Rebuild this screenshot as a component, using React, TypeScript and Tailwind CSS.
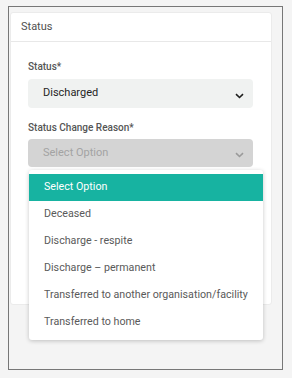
import { useState } from "react";

const options = [
    "Select Option",
    "Deceased",
    "Discharge - respite",
    "Discharge – permanent",
    "Transferred to another organisation/facility",
    "Transferred to home",
];

function Chevron({ muted }: { muted?: boolean }) {
    return (
        <svg width="9" height="6" viewBox="0 0 9 6" className="self-end mb-[9px]">
            <path
                d="M1 1.2l3.5 3.3 3.5-3.3"
                fill="none"
                stroke={muted ? "#9a9a9a" : "#1f1f1f"}
                strokeWidth="1.6"
            />
        </svg>
    );
}

export default function App() {
    const [selected] = useState(0);

    return (
        <div
            className="w-[292px] h-[378px] bg-[#f4f4f4] pt-[6px] pl-[8px]"
            style={{ fontFamily: "Roboto, 'Liberation Sans', sans-serif" }}
        >
            <div className="w-[275px] h-[364px] border border-[#777] pt-[5px] pl-px">
                <div className="w-[262px] h-[293px] bg-white rounded-[3px] border border-[#ebebeb] flex flex-col">
                    {/* header */}
                    <div className="h-[29px] flex items-center pl-[10px] border-b border-[#e8e8e8] text-[11px] text-[#4f4f4f]">
                        Status
                    </div>

                    <div className="px-[17px] pt-[18px] flex flex-col gap-[13px]">
                        <div className="flex flex-col gap-[5px]">
                            <div className="text-[10px] font-medium leading-[14px] text-[#555]">
                                Status*
                            </div>
                            <div className="h-[29px] w-[225px] rounded-[4px] bg-[#f0f2f1] flex justify-between items-center pl-[15px] pr-[9px] text-[11px] text-[#1f1f1f]">
                                Discharged
                                <Chevron />
                            </div>
                        </div>

                        <div className="flex flex-col gap-[4px]">
                            <div className="text-[10px] font-medium leading-[14px] text-[#555]">
                                Status Change Reason*
                            </div>
                            <div className="relative">
                                <div className="h-[28px] w-[225px] rounded-[4px] bg-[#d4d4d4] flex justify-between items-center pl-[15px] pr-[9px] text-[11px] text-[#a3a3a3]">
                                    Select Option
                                    <Chevron muted />
                                </div>

                                {/* open dropdown */}
                                <div className="absolute left-px top-full mt-[3px] w-[234px] py-[4px] bg-white rounded-[3px] shadow-[0_1px_4px_rgba(0,0,0,0.22)] z-10 flex flex-col">
                                    {options.map((opt, i) => (
                                        <div
                                            key={opt}
                                            className={
                                                i === selected
                                                    ? "h-[27px] flex items-center pl-[15px] text-[10.7px] bg-[#17b3a1] text-white"
                                                    : "h-[27px] flex items-center pl-[15px] text-[10.7px] text-[#5a5a5a]"
                                            }
                                        >
                                            {opt}
                                        </div>
                                    ))}
                                </div>
                            </div>
                        </div>
                    </div>
                </div>
            </div>
        </div>
    );
}
